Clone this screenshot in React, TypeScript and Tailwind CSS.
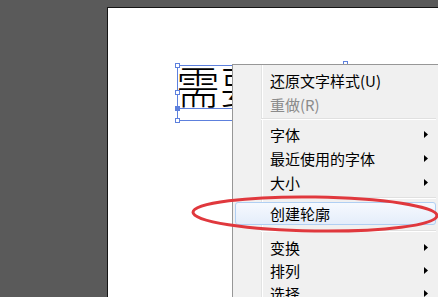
import React from "react";

const Arrow = () => (
  <svg width="4" height="7" viewBox="0 0 4 7" className="shrink-0">
    <path d="M0 0 L4 3.5 L0 7 Z" fill="#000" />
  </svg>
);

type Item = { label: string; arrow?: boolean; disabled?: boolean; hot?: boolean; h: string };

const Row = ({ label, arrow, disabled, hot, h }: Item) => (
  <div
    className={
      "flex items-center justify-between pl-[34px] pr-[7px] rounded-[3px] border " +
      h +
      " " +
      (hot
        ? "border-[#b0cff3] bg-[linear-gradient(#f6f9fe,#e4edfa)]"
        : "border-transparent")
    }
  >
    <span className={disabled ? "text-[#8b8b8b]" : "text-black"}>{label}</span>
    {arrow ? <Arrow /> : null}
  </div>
);

const Sep = ({ h }: { h: string }) => (
  <div className={"flex flex-col justify-center pl-[26px] " + h}>
    <div className="h-px bg-[#e0e0e0]" />
    <div className="h-px bg-white" />
  </div>
);

export default function App() {
  return (
    <div className="relative w-[438px] h-[297px] overflow-hidden bg-[#5a5a5a] pl-[107px] pt-[7px] flex font-['Noto_Sans_CJK_SC','Noto_Sans',sans-serif]">
      {/* artboard */}
      <div className="flex-1 bg-white border-l border-t border-[#151515]" />

      {/* text object on canvas */}
      <div className="absolute left-[176px] top-[63px] text-[44px] font-light leading-none text-black whitespace-nowrap">
        需要
      </div>

      {/* selection box */}
      <div className="absolute left-[177px] top-[65px] w-[336px] h-[56px] border border-[#5d80dd]" />
      <div className="absolute left-[177px] top-[108px] w-[336px] h-px bg-[#5d80dd]" />
      <div className="absolute left-[175px] top-[63px] w-[5px] h-[5px] bg-white border border-[#5d80dd]" />
      <div className="absolute left-[175px] top-[90px] w-[5px] h-[5px] bg-white border border-[#5d80dd]" />
      <div className="absolute left-[175px] top-[118px] w-[5px] h-[5px] bg-white border border-[#5d80dd]" />
      <div className="absolute left-[175px] top-[106px] w-[5px] h-[5px] bg-[#5d80dd]" />
      <div className="absolute left-[343px] top-[61px] w-[5px] h-[5px] bg-white border border-[#5d80dd]" />

      {/* context menu */}
      <div className="absolute left-[232px] top-[64px] w-[212px] border border-[#979797] pt-[3px] pl-[2px] pr-[7px] text-[15px] leading-none bg-[linear-gradient(to_right,#f1f1f1_28px,#e2e3e3_28px,#e2e3e3_29px,#ffffff_29px,#ffffff_30px,#f0f0f0_30px)]">
        <div className="flex flex-col">
          <Row label="还原文字样式(U)" h="h-[24px]" />
          <Row label="重做(R)" disabled h="h-[24px]" />
          <Sep h="h-[6px]" />
          <Row label="字体" arrow h="h-[24px]" />
          <Row label="最近使用的字体" arrow h="h-[24px]" />
          <Row label="大小" arrow h="h-[24px]" />
          <Sep h="h-[8px]" />
          <Row label="创建轮廓" hot h="h-[23px]" />
          <Sep h="h-[11px]" />
          <Row label="变换" arrow h="h-[23px]" />
          <Row label="排列" arrow h="h-[23px]" />
          <Row label="选择" arrow h="h-[23px]" />
        </div>
      </div>

      {/* red annotation ellipse */}
      <svg
        className="absolute left-0 top-0 pointer-events-none"
        width="438"
        height="297"
        viewBox="0 0 438 297"
      >
        <ellipse
          cx="315"
          cy="214"
          rx="122"
          ry="17"
          fill="none"
          stroke="#e0383d"
          strokeWidth="3"
          transform="rotate(0.8 315 214)"
        />
      </svg>
    </div>
  );
}
